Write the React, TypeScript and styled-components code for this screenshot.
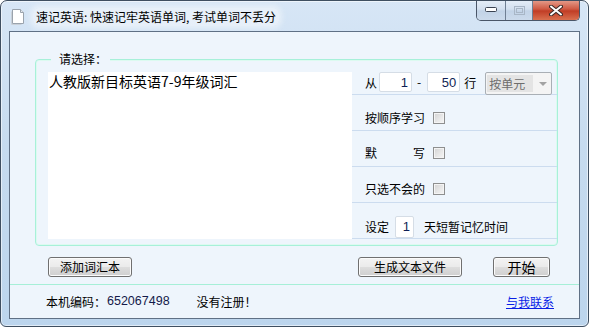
import React from 'react';
import styled, { createGlobalStyle } from 'styled-components';

const GlobalStyle = createGlobalStyle`
  html, body {
    margin: 0;
    padding: 0;
    background: #ffffff;
  }
  body {
    font-family: "Noto Sans CJK SC", "DejaVu Sans", sans-serif;
    font-size: 12px;
    color: #000;
  }
`;

const UI_FONT = `"Noto Sans CJK SC", "Liberation Sans", sans-serif`;
const NUM_FONT = `"Liberation Sans", "Noto Sans CJK SC", sans-serif`;

const Window = styled.div`
  box-sizing: border-box;
  width: 589px;
  height: 327px;
  display: flex;
  flex-direction: column;
  border: 1px solid #3f4f61;
  border-radius: 7px 7px 6px 6px;
  background: linear-gradient(180deg, #d7e6f6 0%, #c6dbef 45%, #bcd5ed 100%);
  box-shadow: inset 0 0 0 1px rgba(255, 255, 255, 0.55);
  overflow: hidden;
  font-family: ${UI_FONT};
`;

const TitleBar = styled.div`
  height: 30px;
  flex-shrink: 0;
  display: flex;
  align-items: flex-start;
`;

const AppIcon = styled.svg`
  margin: 7px 0 0 9px;
  flex-shrink: 0;
`;

const TitleText = styled.span`
  margin: 7px 0 0 7px;
  padding: 0 3px;
  line-height: 18px;
  font-size: 12px;
  color: #000;
  white-space: nowrap;
  background: rgba(236, 243, 250, 0.75);
  border-radius: 6px;
  box-shadow: 0 0 5px 3px rgba(236, 243, 250, 0.7);
`;

const CaptionGroup = styled.div`
  margin-left: auto;
  margin-right: 8px;
  margin-top: -1px;
  display: flex;
  height: 20px;
  border: 1px solid #4a5668;
  border-top: none;
  border-radius: 0 0 5px 5px;
  overflow: hidden;
`;

const CaptionBtn = styled.div<{ $w: number; $close?: boolean }>`
  width: ${(p) => p.$w}px;
  height: 100%;
  display: flex;
  align-items: center;
  justify-content: center;
  background: ${(p) =>
    p.$close
      ? 'linear-gradient(180deg, #e6a08f 0%, #cf5a44 45%, #c13d26 55%, #d9704f 100%)'
      : 'linear-gradient(180deg, #e5eef8 0%, #d3e0ef 45%, #c2d3e7 55%, #cbdaeb 100%)'};
  & + & {
    border-left: 1px solid #6f7f93;
  }
`;

const Client = styled.div`
  flex: 1;
  margin: 0 8px 7px 8px;
  display: flex;
  flex-direction: column;
  border: 1px solid #5f7085;
  background: #eef5fc;
`;

const GroupBox = styled.div`
  position: relative;
  box-sizing: border-box;
  margin: 27px 0 0 25px;
  width: 523px;
  height: 187px;
  padding: 12px 0 6px 12px;
  display: flex;
  border: 1px solid #a7f0d9;
  border-radius: 4px;
  box-shadow: inset 0 0 0 1px #dcfaf0;
`;

const GroupLabel = styled.span`
  position: absolute;
  top: -9px;
  left: 15px;
  padding: 0 3px 0 8px;
  background: #eef5fc;
  line-height: 16px;
  font-size: 12px;
`;

const ListBox = styled.div`
  width: 304px;
  height: 167px;
  background: #ffffff;
  padding: 0 1px;
  box-sizing: border-box;
`;

const ListItem = styled.div`
  font-size: 14px;
  line-height: 19px;
  white-space: nowrap;
`;

const OptionPanel = styled.div`
  flex: 1;
  display: flex;
  flex-direction: column;
`;

const OptionRow = styled.div<{ $h: number; $top: number }>`
  box-sizing: border-box;
  height: ${(p) => p.$h}px;
  padding: ${(p) => p.$top}px 0 0 13px;
  display: flex;
  align-items: ${(p) => (p.$h < 30 ? 'flex-start' : 'center')};
  border-bottom: 1px solid #ccdcef;
  font-size: 12px;
  white-space: nowrap;
`;

const Label = styled.span<{ $w?: number }>`
  display: inline-flex;
  justify-content: space-between;
  width: ${(p) => (p.$w ? `${p.$w}px` : 'auto')};
  line-height: 16px;
`;

const NumBox = styled.div<{ $w: number; $h: number }>`
  box-sizing: border-box;
  width: ${(p) => p.$w}px;
  height: ${(p) => p.$h}px;
  background: #ffffff;
  border: 1px solid #d5dde6;
  border-radius: 2px;
  display: flex;
  align-items: center;
  justify-content: flex-end;
  padding-right: 3px;
  font-family: ${NUM_FONT};
  font-size: 13px;
  color: #0f1f55;
`;

const Dash = styled.span`
  margin: 0 6px 0 5px;
  line-height: 18px;
`;

const Combo = styled.div`
  box-sizing: border-box;
  width: 67px;
  height: 23px;
  margin-left: 9px;
  display: flex;
  align-items: center;
  padding-left: 1px;
  border: 1px solid #a9afb5;
  border-radius: 2px;
  background: #f4f4f4;
  color: #6d6d6d;
  font-size: 12px;
`;

const ComboText = styled.span`
  width: 44px;
  line-height: 17px;
  padding-left: 2px;
  background: #e4e4e4;
`;

const ComboArrow = styled.span`
  margin-left: auto;
  margin-right: 4px;
  width: 0;
  height: 0;
  border-left: 4px solid transparent;
  border-right: 4px solid transparent;
  border-top: 4px solid #a2a2a2;
`;

const Check = styled.span`
  box-sizing: border-box;
  width: 12px;
  height: 12px;
  margin-left: 8px;
  border: 1px solid #8e8f8f;
  background: linear-gradient(135deg, #d2d2d2 0%, #e9e9e9 60%, #f5f5f5 100%);
  box-shadow: inset 0 0 0 1px #f4f4f4;
`;

const ButtonRow = styled.div`
  display: flex;
  align-items: center;
  margin-top: 11px;
  padding: 0 29px 0 38px;
`;

const WinButton = styled.button<{ $w: number; $big?: boolean }>`
  box-sizing: border-box;
  width: ${(p) => p.$w}px;
  height: 20px;
  padding: 0;
  border: 1px solid #707070;
  border-radius: 3px;
  background: linear-gradient(180deg, #f3f3f3 0%, #ebebeb 48%, #dddddd 52%, #cfcfcf 100%);
  box-shadow: inset 0 0 0 1px #fbfbfb;
  font-family: ${UI_FONT};
  font-size: ${(p) => (p.$big ? 14 : 12)}px;
  line-height: 18px;
  color: #000;
`;

const Spacer = styled.div`
  flex: 1;
`;

const Separator = styled.div`
  margin-top: 7px;
  border-top: 1px solid #a6efd7;
`;

const StatusRow = styled.div`
  flex: 1;
  display: flex;
  align-items: center;
  padding: 0 25px 1px 36px;
  font-size: 12px;
  white-space: nowrap;
`;

const MachineCode = styled.span`
  margin-left: 1px;
  font-family: ${NUM_FONT};
  font-size: 12.5px;
  color: #141a4a;
`;

const RegState = styled.span`
  margin-left: 27px;
`;

const ContactLink = styled.a`
  margin-left: auto;
  color: #0a1ee6;
  text-decoration: underline;
  cursor: pointer;
`;

const App: React.FC = () => {
  return (
    <>
      <GlobalStyle />
      <Window>
        <TitleBar>
          <AppIcon width="16" height="17" viewBox="0 0 16 17">
            <path d="M2.5 1.5h8l3 3v11h-11z" fill="#ffffff" stroke="#9aa3ad" />
            <path d="M10.5 1.5v3h3" fill="#e8ecf0" stroke="#9aa3ad" />
            <path d="M1.5 3.5v13h10" fill="none" stroke="#c9d0d8" />
          </AppIcon>
          <TitleText>速记英语: 快速记牢英语单词, 考试单词不丢分</TitleText>
          <CaptionGroup>
            <CaptionBtn $w={28}>
              <svg width="12" height="6" viewBox="0 0 12 6">
                <rect x="0.5" y="0.5" width="11" height="4" rx="1" fill="#ffffff" stroke="#3a4352" />
              </svg>
            </CaptionBtn>
            <CaptionBtn $w={26}>
              <svg width="11" height="9" viewBox="0 0 11 9">
                <rect x="0.5" y="0.5" width="10" height="8" fill="none" stroke="#a8b6c6" />
                <rect x="2.5" y="2.5" width="6" height="4" fill="none" stroke="#a8b6c6" />
              </svg>
            </CaptionBtn>
            <CaptionBtn $w={46} $close>
              <svg width="14" height="11" viewBox="0 0 14 11">
                <path d="M2 1.5l10 8M12 1.5l-10 8" stroke="#3b2a28" strokeWidth="4" strokeLinecap="round" />
                <path d="M2 1.5l10 8M12 1.5l-10 8" stroke="#ffffff" strokeWidth="2" strokeLinecap="round" />
              </svg>
            </CaptionBtn>
          </CaptionGroup>
        </TitleBar>

        <Client>
          <GroupBox>
            <GroupLabel>请选择：</GroupLabel>
            <ListBox>
              <ListItem>人教版新目标英语7-9年级词汇</ListItem>
            </ListBox>
            <OptionPanel>
              <OptionRow $h={23} $top={0}>
                <Label style={{ marginTop: 3 }}>从</Label>
                <NumBox $w={33} $h={20} style={{ marginLeft: 2 }}>1</NumBox>
                <Dash style={{ marginTop: 1 }}>-</Dash>
                <NumBox $w={33} $h={20}>50</NumBox>
                <Label style={{ marginTop: 3, marginLeft: 4 }}>行</Label>
                <Combo>
                  <ComboText>按单元</ComboText>
                  <ComboArrow />
                </Combo>
              </OptionRow>
              <OptionRow $h={36} $top={11}>
                <Label $w={60}>按顺序学习</Label>
                <Check />
              </OptionRow>
              <OptionRow $h={36} $top={8}>
                <Label $w={60}>
                  <span>默</span>
                  <span>写</span>
                </Label>
                <Check />
              </OptionRow>
              <OptionRow $h={36} $top={8}>
                <Label $w={60}>只选不会的</Label>
                <Check />
              </OptionRow>
              <OptionRow $h={36} $top={12}>
                <Label>设定</Label>
                <NumBox $w={19} $h={22} style={{ marginLeft: 6 }}>1</NumBox>
                <Label style={{ marginLeft: 10 }}>天短暂记忆时间</Label>
              </OptionRow>
            </OptionPanel>
          </GroupBox>

          <ButtonRow>
            <WinButton $w={84}>添加词汇本</WinButton>
            <Spacer />
            <WinButton $w={104}>生成文本文件</WinButton>
            <WinButton $w={57} $big style={{ marginLeft: 31 }}>开始</WinButton>
          </ButtonRow>

          <Separator />

          <StatusRow>
            <span>本机编码：</span>
            <MachineCode>652067498</MachineCode>
            <RegState>没有注册！</RegState>
            <ContactLink>与我联系</ContactLink>
          </StatusRow>
        </Client>
      </Window>
    </>
  );
};

export default App;
